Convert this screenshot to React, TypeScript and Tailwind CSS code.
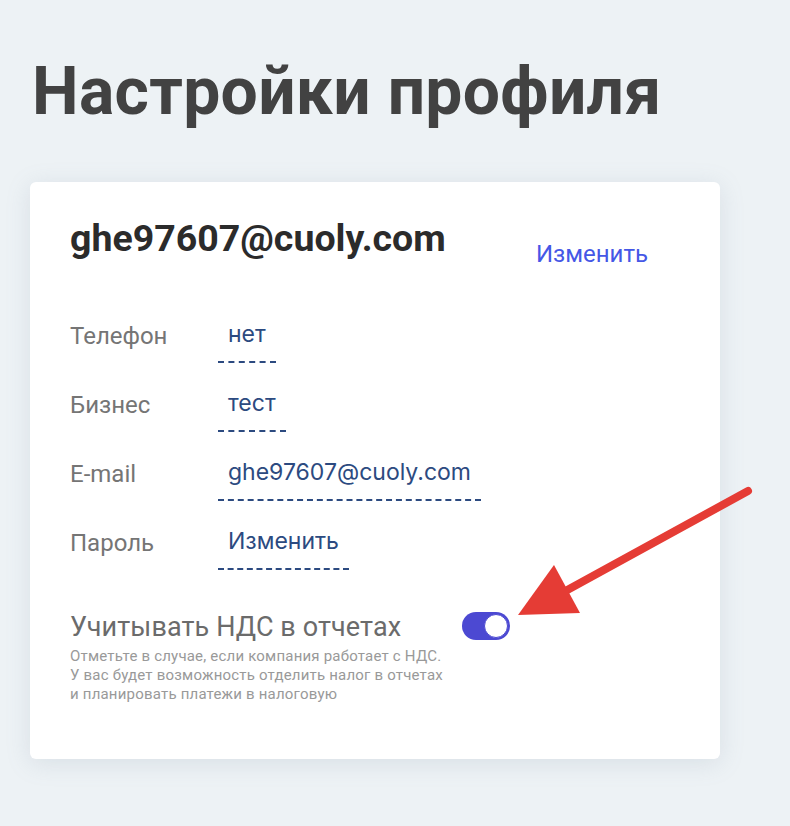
import React from "react";

const fields = [
  { label: "Телефон", value: "нет" },
  { label: "Бизнес", value: "тест" },
  { label: "E-mail", value: "ghe97607@cuoly.com" },
  { label: "Пароль", value: "Изменить" },
];

const Toggle = () => (
  <div className="w-[48px] h-[28px] rounded-full bg-[#4c49d2] flex items-center justify-end pr-[2px]">
    <div className="w-[24px] h-[24px] rounded-full bg-white border border-[#4c49d2]" />
  </div>
);

const App = () => {
  return (
    <div className="relative min-h-[826px] bg-[#edf2f5] pt-[42px] pl-[30px] font-['Roboto',sans-serif]">
      <h1 className="pl-[2px] text-[66px] leading-[100px] font-bold text-[#424242] tracking-[0.3px]">
        Настройки профиля
      </h1>
      <div className="mt-[40px] w-[690px] h-[577px] rounded-[6px] bg-white shadow-[0_4px_24px_rgba(120,140,160,0.18)] pl-[40px] pr-[72px] pt-[34px]">
        <div className="flex items-end justify-between">
          <div className="text-[37.5px] leading-[44px] font-bold text-[#2b2b2b]">ghe97607@cuoly.com</div>
          <a className="text-[24px] leading-[28px] text-[#4557e6] mb-[-8px]">Изменить</a>
        </div>
        <div className="mt-[54px] flex flex-col gap-[20px]">
          {fields.map((f) => (
            <div key={f.label} className="flex items-start">
              <div className="w-[148px] pt-[8px] text-[24px] leading-[28px] text-[#757575]">{f.label}</div>
              <div className="mt-[5px] px-[10px] pb-[12px] border-b-2 border-dashed border-[#2c4a80] font-['Inter',sans-serif] text-[23px] leading-[30px] text-[#2c4a80]">
                {f.value}
              </div>
            </div>
          ))}
        </div>
        <div className="mt-[42px] flex items-start">
          <div className="w-[372px]">
            <div className="text-[27px] leading-[30px] text-[#6b6b6b] tracking-[0.1px]">Учитывать НДС в отчетах</div>
            <div className="mt-[5px] text-[15px] leading-[19px] text-[#999999] tracking-[0.2px] whitespace-nowrap">
              Отметьте в случае, если компания работает с НДС.
              <br />
              У вас будет возможность отделить налог в отчетах
              <br />
              и планировать платежи в налоговую
            </div>
          </div>
          <div className="ml-[20px]">
            <Toggle />
          </div>
        </div>
      </div>
      <svg className="absolute left-0 top-0 pointer-events-none" width="790" height="826" viewBox="0 0 790 826">
        <line x1="748" y1="491" x2="560" y2="594" stroke="#e53c35" strokeWidth="8" strokeLinecap="round" />
        <polygon points="518,615 554,565 580,613" fill="#e53c35" />
      </svg>
    </div>
  );
};

export default App;
